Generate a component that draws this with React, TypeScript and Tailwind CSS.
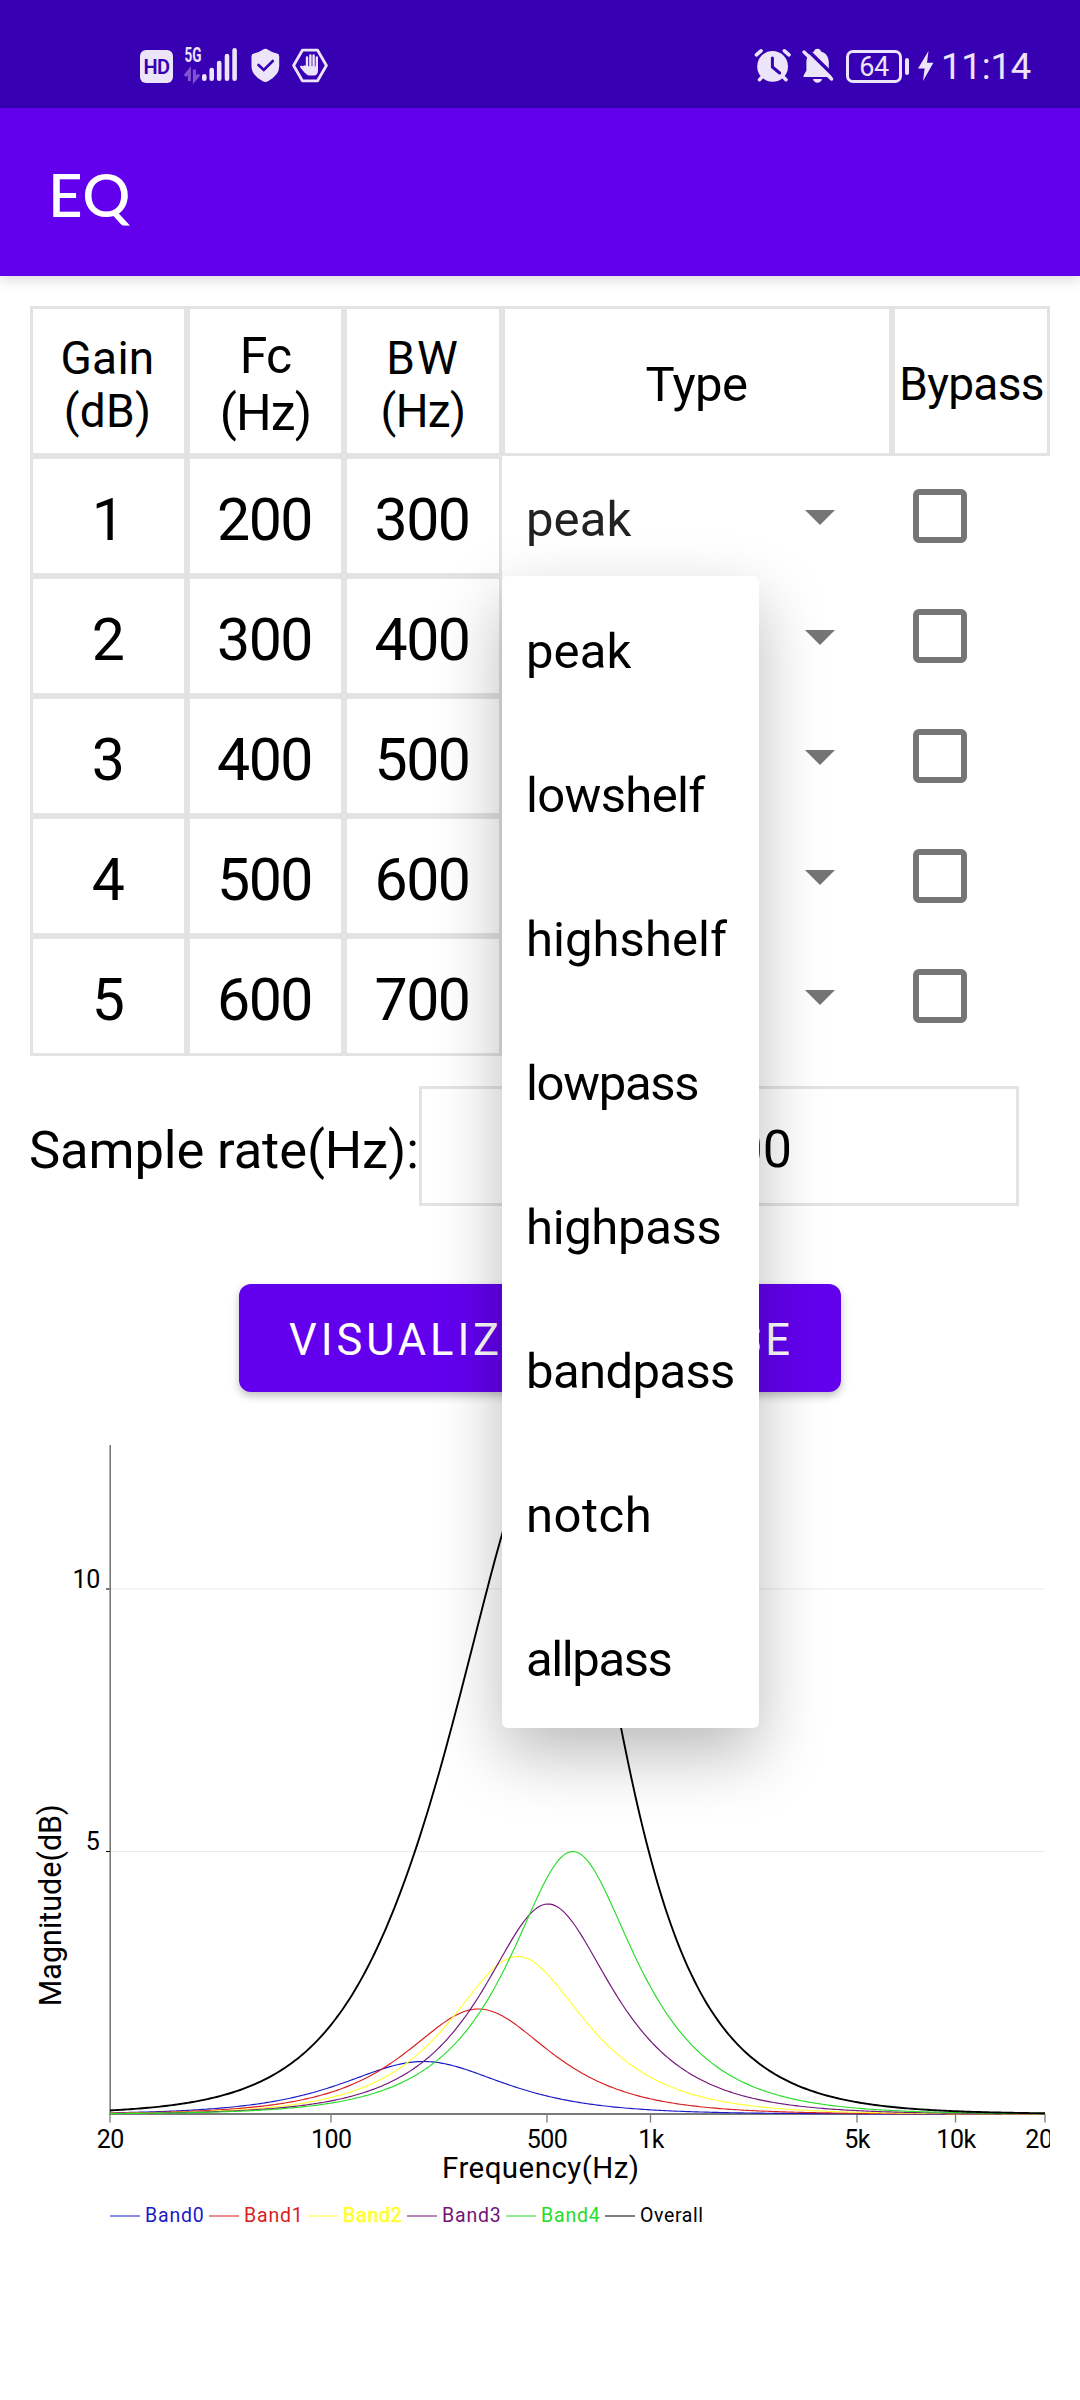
import React from "react";

type Band = { gain: number; fc: number; bw: number; color: string };

const BANDS: Band[] = [
  { gain: 1, fc: 200, bw: 300, color: "#1a1ac8" },
  { gain: 2, fc: 300, bw: 400, color: "#d81e1e" },
  { gain: 3, fc: 400, bw: 500, color: "#ffff33" },
  { gain: 4, fc: 500, bw: 600, color: "#731478" },
  { gain: 5, fc: 600, bw: 700, color: "#28dc28" },
];

const FILTER_TYPES = [
  { name: "peak", cls: "tracking-[0.1px]" },
  { name: "lowshelf", cls: "tracking-[-0.65px]" },
  { name: "highshelf", cls: "tracking-[0.05px]" },
  { name: "lowpass", cls: "tracking-[-1.3px]" },
  { name: "highpass", cls: "tracking-[-0.35px]" },
  { name: "bandpass", cls: "tracking-[-0.6px]" },
  { name: "notch", cls: "tracking-[0.5px]" },
  { name: "allpass", cls: "tracking-[-1.4px]" },
];

/* ---------- status bar ---------- */

const INK = "#ece4f8";
const BAR = "#3700b3";

function SignalIcon() {
  return (
    <svg className="ml-[11px] h-9 w-[54px] overflow-visible" viewBox="184 48 54 36">
      <text
        x="184.6"
        y="62.4"
        fontFamily="Roboto"
        fontWeight="700"
        fontSize="19.5"
        fill={INK}
        textLength="17"
        lengthAdjust="spacingAndGlyphs"
      >
        5G
      </text>
      <g stroke="#8055d2" strokeWidth="3" fill="none">
        <path d="M189.4 81V70.5L185 76" />
        <path d="M194.4 69.5V80L199 74.5" />
      </g>
      <g stroke={INK} strokeWidth="4.6" strokeLinecap="round">
        <path d="M204.3 76.2V78.8M211.7 70V78.8M219.2 63V78.8M227 56V78.8M234.6 50.3V78.8" />
      </g>
    </svg>
  );
}

function ShieldIcon() {
  return (
    <svg className="ml-[13px] h-9 w-[29px]" viewBox="251 48 29 36">
      <path
        d="M265.4 48.8Q267 48.8 268 49.8Q272 52.6 277 53.6Q279.2 54 279.2 56.2V66.5Q279.2 75 268 81.3Q265.4 82.8 262.8 81.3Q251.5 75 251.5 66.5V56.2Q251.5 54 253.8 53.6Q258.8 52.6 262.8 49.8Q264 48.8 265.4 48.8Z"
        fill={INK}
      />
      <path d="M258.5 65L263.8 70L272.8 61" fill="none" stroke={BAR} strokeWidth="2.6" strokeLinecap="round" />
    </svg>
  );
}

function HandIcon() {
  return (
    <svg className="ml-3 h-9 w-9" viewBox="292 48 36 36">
      <path
        d="M302.4 50.2H317.6L326.4 65.5L317.6 80.8H302.4L293.6 65.5Z"
        fill="none"
        stroke={INK}
        strokeWidth="2.8"
        strokeLinejoin="round"
      />
      <path d="M304.8 65.2L307 66.2H318V70C318 73.5 316.8 75 314.5 75.6H309C306.6 75 305.6 73.6 304 71L300.6 67Z" fill={INK} />
      <g stroke={INK} strokeWidth="2.4" strokeLinecap="round">
        <path d="M307 57.4V68M310.4 55.4V68M313.6 55.4V68M316.8 57.4V70M301.2 66.8L305.6 72" />
      </g>
    </svg>
  );
}

function AlarmIcon() {
  return (
    <svg className="ml-[426px] h-9 w-[37px]" viewBox="754 48 37 36">
      <circle cx="772.6" cy="66.4" r="15.4" fill={INK} />
      <g stroke={INK} strokeLinecap="round" fill="none">
        <path d="M756.4 54.8L761 50.8M789 54.8L784.4 50.8" strokeWidth="3.6" />
        <path d="M762 77L759.4 79.8M783.2 77L786 79.8" strokeWidth="3.4" />
      </g>
      <path d="M772.4 58V67L779.6 73" fill="none" stroke={BAR} strokeWidth="3" strokeLinecap="round" strokeLinejoin="round" />
    </svg>
  );
}

function BellOffIcon() {
  return (
    <svg className="ml-2.5 h-9 w-[34px]" viewBox="801 48 34 36">
      <path
        d="M817.5 48.8C819.6 48.8 820.8 50 821 51.6C826 53 828.8 57 828.8 62.5V70.5L831.8 75.4Q832.6 77 830.8 77H804.4Q802.6 77 803.6 75.4L806.4 70.5V62.5C806.4 57 809.2 53 814 51.6C814.2 50 815.4 48.8 817.5 48.8Z"
        fill={INK}
      />
      <path d="M813 79H822Q821 82.8 817.5 82.8Q814 82.8 813 79Z" fill={INK} />
      <path d="M806.5 49L834.5 76.5" stroke={BAR} strokeWidth="3.6" />
      <path d="M804 52L831.6 79" stroke={INK} strokeWidth="3.4" strokeLinecap="round" />
    </svg>
  );
}

function StatusBar() {
  return (
    <div className="flex h-[108px] items-center bg-[#3700b3] pt-6 pl-[140px] text-[#ece4f8]">
      <div className="flex h-[33px] w-[33px] items-center justify-center rounded-[6px] bg-[#ece4f8] pt-px text-[20px] leading-none font-semibold tracking-[-0.6px] text-[#3700b3]">
        HD
      </div>
      <SignalIcon />
      <ShieldIcon />
      <HandIcon />
      <AlarmIcon />
      <BellOffIcon />
      <div className="ml-[11px] flex h-[33px] items-center">
        <div className="flex h-[33px] w-14 items-center justify-center rounded-[7px] border-[3px] border-[#ece4f8] pt-0.5 text-[27px] leading-none tracking-[-0.4px]">
          64
        </div>
        <div className="ml-[3px] h-[17px] w-1 rounded-[2px] bg-[#ece4f8]" />
      </div>
      <svg className="ml-[9px] h-9 w-4" viewBox="918 48 16 36">
        <path d="M928.5 51L918 68.6H924.6L923 81L933.4 62.8H927Z" fill={INK} />
      </svg>
      <div className="ml-[7px] pt-[3px] text-[36.5px] leading-none tracking-[-0.15px]">11:14</div>
    </div>
  );
}

/* ---------- band table ---------- */

const GRID = "grid grid-cols-[157px_157px_158px_390px_158px]";
const HEAD = "flex items-center justify-center border-[3px] border-[#e3e3e3] text-center";
const CELL =
  "flex items-center justify-center border-[3px] border-[#e3e3e3] pt-[7px] pr-[2px] text-[59px] leading-none tracking-[-1.5px]";

function BandTable() {
  return (
    <div className="relative mx-[30px] mt-[30px] w-[1020px]">
      <div className={`${GRID} h-[150px]`}>
        <div className={`${HEAD} pt-[8px] pr-[2px] text-[46px] leading-[53px] tracking-[0.3px]`}>
          Gain
          <br />
          (dB)
        </div>
        <div className={`${HEAD} pt-[7px] text-[50px] leading-[57px] tracking-[-0.9px]`}>
          Fc
          <br />
          (Hz)
        </div>
        <div className={`${HEAD} pt-[8px] text-[46px] leading-[53px]`}>
          <div>
            <div className="tracking-[2px]">BW</div>
            <div className="tracking-[-0.6px]">(Hz)</div>
          </div>
        </div>
        <div className={`${HEAD} pt-[6px] pr-px text-[49px] leading-none tracking-[-0.6px]`}>Type</div>
        <div className={`${HEAD} pt-[6px] pl-px text-[46px] leading-none tracking-[-0.75px]`}>Bypass</div>
      </div>
      {BANDS.map((b, i) => (
        <div key={b.fc} className={`${GRID} h-[120px]`}>
          <div className={CELL}>{b.gain}</div>
          <div className={CELL}>{b.fc}</div>
          <div className={CELL}>{b.bw}</div>
          <div className="flex items-center pr-[57px] pl-6">
            {i === 0 && <span className="pt-[6px] text-[49px] leading-none tracking-[0.1px] text-[#222]">peak</span>}
            <svg className="mt-[2px] ml-auto h-[15px] w-[30px]" viewBox="0 0 30 15">
              <path d="M0 0H30L15 15Z" fill="#757575" />
            </svg>
          </div>
          <div className="flex items-center pl-[21px]">
            <div className="h-[54px] w-[54px] rounded-[6px] border-[6px] border-[#757575]" />
          </div>
        </div>
      ))}
      <TypeMenu />
    </div>
  );
}

function TypeMenu() {
  return (
    <div className="absolute top-[270px] left-[472px] z-10 flex w-[257px] flex-col rounded-[6px] bg-white shadow-[0_26px_66px_rgba(0,0,0,0.27)]">
      {FILTER_TYPES.map((t) => (
        <div key={t.name} className="flex h-36 items-center pt-[6px] pl-6 text-[49px] leading-none">
          <span className={t.cls}>{t.name}</span>
        </div>
      ))}
    </div>
  );
}

/* ---------- response chart ---------- */

const X0 = 110;
const X1 = 1045;
const Y0 = 2114;
const PX_PER_DECADE = 313.3;
const PX_PER_DB = 52.5;

// Magnitude of an analogue peaking filter in dB.
function peakDb({ gain, fc, bw }: Band, f: number) {
  const a = Math.pow(10, gain / 40);
  const q = fc / bw;
  const u = f / fc - fc / f;
  return 10 * Math.log10((u * u + (a / q) ** 2) / (u * u + 1 / (a * q) ** 2));
}

function curve(fn: (f: number) => number) {
  const pts: string[] = [];
  for (let x = X0; x <= X1; x += 2.5) {
    const f = 20 * Math.pow(10, (x - X0) / PX_PER_DECADE);
    pts.push(`${x} ${(Y0 - fn(f) * PX_PER_DB).toFixed(2)}`);
  }
  return "M" + pts.join("L");
}

const X_TICKS = [
  { x: 110, tx: 110.2, label: "20" },
  { x: 331, tx: 331.3, label: "100" },
  { x: 547, tx: 547, label: "500" },
  { x: 650.5, tx: 651, label: "1k" },
  { x: 857, tx: 857, label: "5k" },
  { x: 955.5, tx: 956, label: "10k" },
  { x: 1045, tx: 1045, label: "20k" },
];

const LEGEND = [
  ...BANDS.map((b, i) => ({ label: `Band${i}`, color: b.color, x: 110 + i * 99, len: 56.8 })),
  { label: "Overall", color: "#000000", x: 605, len: 61 },
];

function ResponseChart() {
  return (
    <svg className="mt-[38px] h-[810px] w-[1050px]" viewBox="0 1430 1050 810" fontFamily="Roboto" fill="#000">
      <path d="M111 1589H1045" stroke="#f5f5f5" strokeWidth="2" />
      <path d="M111 1851.5H1045" stroke="#ebebeb" strokeWidth="1" />
      <g stroke="#7a7a7a" strokeWidth="1.6" fill="none">
        <path d="M110.2 1445V2114.8" />
        <path d="M109.4 2114H1045" strokeWidth="2" />
        <path d="M106 1589H110" strokeWidth="2" />
        <path d="M106 1851.5H110" stroke="#000" strokeWidth="1" />
        {X_TICKS.map((t) => (
          <path key={t.label} d={`M${t.x} 2114V2122.5`} strokeWidth="1.3" />
        ))}
      </g>
      {BANDS.map((b) => (
        <path key={b.fc} d={curve((f) => peakDb(b, f))} fill="none" stroke={b.color} strokeWidth="1.15" />
      ))}
      <path
        d={curve((f) => BANDS.reduce((s, b) => s + peakDb(b, f), 0))}
        fill="none"
        stroke="#000"
        strokeWidth="1.9"
      />
      <g fontSize="25" textAnchor="end">
        <text x="99.8" y="1588" letterSpacing="-0.4">10</text>
        <text x="99.8" y="1850">5</text>
      </g>
      <g fontSize="25" textAnchor="middle" letterSpacing="-0.5">
        {X_TICKS.map((t) => (
          <text key={t.label} x={t.tx} y="2147.5">
            {t.label}
          </text>
        ))}
      </g>
      <text x="442" y="2177.7" fontSize="29.5" letterSpacing="0.45">
        Frequency(Hz)
      </text>
      <text transform="translate(61.3 2006.3) rotate(-90)" fontSize="30.5">
        Magnitude(dB)
      </text>
      {LEGEND.map((l) => (
        <g key={l.label}>
          <path d={`M${l.x} 2216H${l.x + 30}`} stroke={l.color} strokeWidth="2" opacity="0.5" />
          <text
            x={l.x + 35}
            y="2221.6"
            fontSize="19.5"
            fill={l.color}
            textLength={l.len + 2}
            stroke={l.color}
            strokeWidth={l.label === "Band2" ? 0.7 : 0}
          >
            {l.label}
          </text>
        </g>
      ))}
    </svg>
  );
}

export default function App() {
  return (
    <div className="flex h-[2400px] w-[1080px] flex-col overflow-hidden bg-white font-[Roboto,sans-serif] text-black">
      <StatusBar />
      <header className="flex h-[168px] items-center bg-[#6200ee] pt-1 pl-12 font-[Lato,sans-serif] text-[60px] leading-none font-medium tracking-[0.5px] text-white shadow-[0_4px_12px_rgba(0,0,0,0.14)]">
        EQ
      </header>
      <BandTable />
      <div className="mt-[30px] flex h-[120px] items-center pl-[29px]">
        <label className="w-[390px] pt-[8px] text-[52.5px] leading-none tracking-[-0.12px] whitespace-nowrap">
          Sample rate(Hz):
        </label>
        <div className="flex h-[120px] w-[600px] items-center justify-center border-[3px] border-[#e3e3e3] pt-[8px] text-[52px] leading-none">
          44100
        </div>
      </div>
      <button className="mt-[78px] ml-[239px] h-[108px] w-[602px] rounded-[12px] bg-[#6200ee] pt-[5px] pl-[3px] text-[43.5px] leading-none tracking-[3.9px] whitespace-nowrap text-white shadow-[0_4px_8px_rgba(0,0,0,0.25)]">
        VISUALIZE RESPONSE
      </button>
      <ResponseChart />
    </div>
  );
}
